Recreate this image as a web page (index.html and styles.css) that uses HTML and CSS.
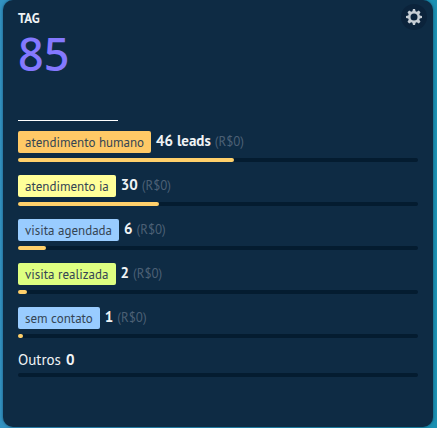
FILE: index.html
```html
<!DOCTYPE html>
<html lang="pt-BR">
<head>
<meta charset="utf-8">
<title>TAG</title>
<link rel="stylesheet" href="styles.css">
</head>
<body>
<section class="card">
  <header class="card-header">
    <h1 class="title">TAG</h1>
    <button class="settings" type="button" aria-label="Configurações">
      <svg viewBox="0 0 16 16" width="16" height="16" aria-hidden="true">
        <path fill="currentColor" fill-rule="evenodd" d="M7 0h2l.6 2.200 1.200.5 2-1.200 1.700 1.700-1.200 2 .5 1.200L16 7v2l-2.200.6-.5 1.200 1.200 2-1.700 1.700-2-1.200-1.200.5L9 16H7l-.6-2.200-1.200-.5-2 1.200-1.700-1.700 1.200-2-.5-1.200L0 9V7l2.200-.6.5-1.200-1.200-2 1.700-1.700 2 1.200 1.200-.5zM8 4.500a3.500 3.500 0 1 0 0 7a3.500 3.500 0 1 0 0-7z"/>
      </svg>
    </button>
  </header>
  <p class="total">85</p>
  <hr class="rule">
  <ul class="list">
    <li class="item">
      <div class="label"><span class="tag orange">atendimento humano</span><strong class="count">46 leads</strong><span class="money">(R$0)</span></div>
      <div class="track"><div class="fill" style="width:54%"></div></div>
    </li>
    <li class="item">
      <div class="label"><span class="tag yellow">atendimento ia</span><strong class="count">30</strong><span class="money">(R$0)</span></div>
      <div class="track"><div class="fill" style="width:35.3%"></div></div>
    </li>
    <li class="item">
      <div class="label"><span class="tag blue">visita agendada</span><strong class="count">6</strong><span class="money">(R$0)</span></div>
      <div class="track"><div class="fill" style="width:7%"></div></div>
    </li>
    <li class="item">
      <div class="label"><span class="tag lime">visita realizada</span><strong class="count">2</strong><span class="money">(R$0)</span></div>
      <div class="track"><div class="fill" style="width:2.3%"></div></div>
    </li>
    <li class="item">
      <div class="label"><span class="tag blue">sem contato</span><strong class="count">1</strong><span class="money">(R$0)</span></div>
      <div class="track"><div class="fill" style="width:1.2%"></div></div>
    </li>
    <li class="item">
      <div class="label others"><span>Outros</span><strong class="count">0</strong></div>
      <div class="track"></div>
    </li>
  </ul>
</section>
</body>
</html>
```
FILE: styles.css
```css
* { box-sizing: border-box; }

body {
  margin: 0;
  min-height: 100vh;
  display: flex;
  padding: 0 4px 1px 3px;
  background: linear-gradient(90deg, #3292c2, #1b91b3);
  font-family: "PT Sans", "Noto Sans", sans-serif;
  color: #f0f3f5;
}

.card {
  flex: 1;
  padding: 9px 15px 48px;
  border-radius: 10px;
  background: #0e2b44;
  box-shadow: 0 0 3px rgba(0, 20, 40, 0.5);
}

.card-header {
  display: flex;
  justify-content: space-between;
  height: 16px;
}

.title {
  margin: 0;
  font-size: 13px;
  font-weight: 700;
  line-height: 19px;
}

.settings {
  display: flex;
  align-items: center;
  justify-content: center;
  width: 26px;
  height: 26px;
  margin: -5px -9px 0 0;
  padding: 0;
  border: 0;
  border-radius: 50%;
  background: #0b233b;
  color: #c6cdd4;
}

.total {
  margin: 0;
  font-family: "Noto Sans", sans-serif;
  font-size: 45px;
  font-weight: 500;
  line-height: 58px;
  color: #8478ff;
}

.rule {
  width: 25%;
  height: 1px;
  margin: 37px 0 10px;
  border: 0;
  background: #fff;
}

.list {
  display: flex;
  flex-direction: column;
  gap: 13px;
  margin: 0;
  padding: 0;
  list-style: none;
}

.label {
  display: flex;
  gap: 4px;
  height: 22px;
  margin-bottom: 5px;
  font-size: 15px;
  line-height: 20px;
}

.others {
  gap: 5px;
  height: 17px;
  line-height: 17px;
}

.tag {
  padding: 1px 7px 0;
  margin-right: 1px;
  border-radius: 2px;
  font-size: 13px;
  line-height: 22px;
  color: #354554;
}

.orange { background: #ffc966; }
.yellow { background: #ffff99; }
.blue { background: #99ccff; }
.lime { background: #deff81; }

.money {
  font-size: 13px;
  line-height: 22px;
  color: #4c6075;
}

.track {
  height: 4px;
  border-radius: 2px;
  background: #041c30;
}

.fill {
  height: 100%;
  border-radius: 2px;
  background: #ffd06b;
}
```
